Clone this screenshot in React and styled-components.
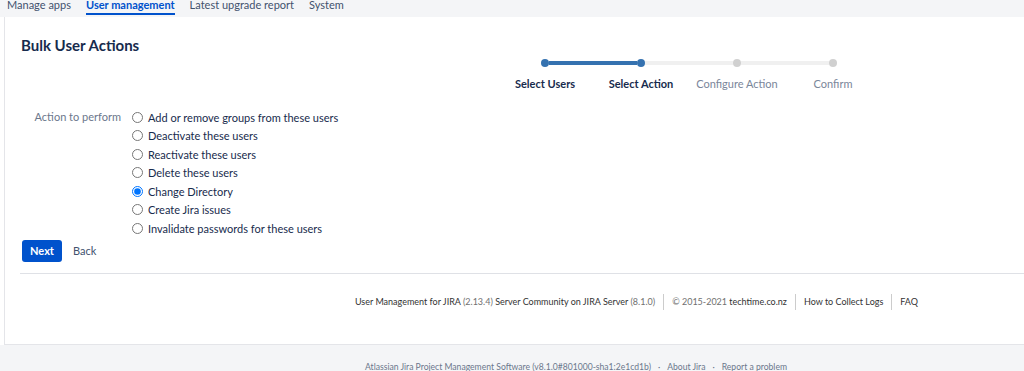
import styled, { createGlobalStyle } from 'styled-components'

const GlobalStyle = createGlobalStyle`
    html, body {
        margin: 0;
        padding: 0;
        background: #fff;
        font-family: Lato, "Liberation Sans", sans-serif;
        color: #172b4d;
        overflow: hidden;
    }
`

const tabs = ['Manage apps', 'User management', 'Latest upgrade report', 'System']

const steps = [
    { label: 'Select Users', done: true },
    { label: 'Select Action', done: true },
    { label: 'Configure Action', done: false },
    { label: 'Confirm', done: false },
]

const actions = [
    'Add or remove groups from these users',
    'Deactivate these users',
    'Reactivate these users',
    'Delete these users',
    'Change Directory',
    'Create Jira issues',
    'Invalidate passwords for these users',
]

function App() {
    return (
        <Page>
            <GlobalStyle />
            <TabBar>
                {tabs.map((t, i) => (
                    <Tab key={t} $active={i === 1}>{t}</Tab>
                ))}
            </TabBar>

            <Main>
                <Panel>
                    <Title>Bulk User Actions</Title>

                    <Stepper>
                        {steps.map((s, i) => (
                            <Step key={s.label}>
                                <Track>
                                    <Half $hidden={i === 0} $done={s.done} />
                                    <Dot $done={s.done} />
                                    <Half $hidden={i === steps.length - 1} $done={steps[i + 1]?.done} />
                                </Track>
                                <StepLabel $done={s.done}>{s.label}</StepLabel>
                            </Step>
                        ))}
                    </Stepper>

                    <Field>
                        <FieldLabel>Action to perform</FieldLabel>
                        <Options>
                            {actions.map((a) => (
                                <Option key={a}>
                                    <input type="radio" name="action" defaultChecked={a === 'Change Directory'} />
                                    <span>{a}</span>
                                </Option>
                            ))}
                        </Options>
                    </Field>

                    <Buttons>
                        <PrimaryButton>Next</PrimaryButton>
                        <LinkButton>Back</LinkButton>
                    </Buttons>

                    <Divider />

                    <Credits>
                        <Credit>
                            User Management for JIRA <Muted>(2.13.4)</Muted> Server Community on JIRA Server <Muted>(8.1.0)</Muted>
                        </Credit>
                        <Credit>
                            <Muted>© 2015-2021</Muted> techtime.co.nz
                        </Credit>
                        <Credit>How to Collect Logs</Credit>
                        <Credit>FAQ</Credit>
                    </Credits>
                </Panel>
            </Main>

            <PageFooter>
                Atlassian Jira Project Management Software (v8.1.0#801000-sha1:2e1cd1b)
                <Dotsep>·</Dotsep>About Jira<Dotsep>·</Dotsep>Report a problem
            </PageFooter>
        </Page>
    )
}

const Page = styled.div`
    width: 1024px;
    height: 371px;
    display: flex;
    flex-direction: column;
    overflow: hidden;
`

const TabBar = styled.div`
    height: 23px;
    margin-top: -6px;
    background: #f4f5f7;
    display: flex;
    gap: 15px;
    padding-left: 7px;
    flex-shrink: 0;
`

const Tab = styled.div`
    font-size: 11px;
    line-height: 21px;
    color: ${(p) => (p.$active ? '#0052cc' : '#42526e')};
    font-weight: ${(p) => (p.$active ? 700 : 400)};
    border-bottom: 2px solid ${(p) => (p.$active ? '#0052cc' : 'transparent')};
    height: 21px;
    box-sizing: border-box;
`

const Main = styled.div`
    height: 328px;
    display: flex;
    padding-left: 4px;
    flex-shrink: 0;
`

const Panel = styled.div`
    flex: 1;
    border-left: 1px solid #e4e5e9;
    border-bottom: 1px solid #e4e5e9;
    background: #fff;
    display: flex;
    flex-direction: column;
`

const Title = styled.h2`
    margin: 18px 0 0 16px;
    font-size: 15px;
    line-height: 20px;
    font-weight: 700;
    color: #172b4d;
`

const Stepper = styled.div`
    display: flex;
    justify-content: flex-end;
    padding-right: 143px;
    margin-top: 4px;
`

const Step = styled.div`
    width: 96px;
    display: flex;
    flex-direction: column;
    align-items: center;
`

const Track = styled.div`
    width: 100%;
    height: 8px;
    display: flex;
    align-items: center;
`

const Half = styled.div`
    flex: 1;
    height: 4px;
    background: ${(p) => (p.$hidden ? 'transparent' : p.$done ? '#3572b0' : '#f0f0f0')};
`

const Dot = styled.div`
    width: 8px;
    height: 8px;
    border-radius: 50%;
    background: ${(p) => (p.$done ? '#3572b0' : '#d0d0d0')};
    flex-shrink: 0;
`

const StepLabel = styled.div`
    margin-top: 10px;
    font-size: 11px;
    line-height: 14px;
    font-weight: ${(p) => (p.$done ? 700 : 400)};
    color: ${(p) => (p.$done ? '#172b4d' : '#7a869a')};
    white-space: nowrap;
`

const Field = styled.div`
    display: grid;
    grid-template-columns: 100px 1fr;
    column-gap: 11px;
    margin: 17px 0 0 16px;
`

const FieldLabel = styled.div`
    text-align: right;
    font-size: 11px;
    line-height: 18.5px;
    color: #6b778c;
`

const Options = styled.div`
    display: flex;
    flex-direction: column;
`

const Option = styled.label`
    display: flex;
    align-items: center;
    gap: 5px;
    height: 18.5px;
    font-size: 11px;
    color: #172b4d;

    input {
        width: 11px;
        height: 11px;
        margin: 0;
        accent-color: #0075ff;
    }
`

const Buttons = styled.div`
    display: flex;
    align-items: center;
    gap: 11px;
    margin: 2px 0 0 17px;
`

const PrimaryButton = styled.button`
    width: 40px;
    height: 22px;
    border: none;
    border-radius: 3px;
    background: #0052cc;
    color: #fff;
    font-family: inherit;
    font-size: 11px;
    font-weight: 700;
    padding: 0;
`

const LinkButton = styled.button`
    border: none;
    background: none;
    padding: 0;
    font-family: inherit;
    font-size: 11px;
    color: #42526e;
`

const Divider = styled.hr`
    margin: 11px 0 0 15px;
    border: none;
    border-top: 1px solid #dfe1e6;
`

const Credits = styled.div`
    display: flex;
    justify-content: flex-end;
    align-items: center;
    padding-right: 98px;
    margin-top: 20px;
    font-size: 9px;
    color: #333;
`

const Credit = styled.div`
    padding: 0 8px;
    line-height: 16px;
    border-left: 1px solid #ccc;
    white-space: nowrap;

    &:first-child {
        border-left: none;
    }
`

const Muted = styled.span`
    color: #707070;
`

const PageFooter = styled.div`
    flex: 1;
    background: #f4f5f7;
    font-size: 8.6px;
    color: #6b778c;
    padding: 17px 0 0 365px;
    white-space: nowrap;
`

const Dotsep = styled.span`
    padding: 0 7px;
`

export default App
